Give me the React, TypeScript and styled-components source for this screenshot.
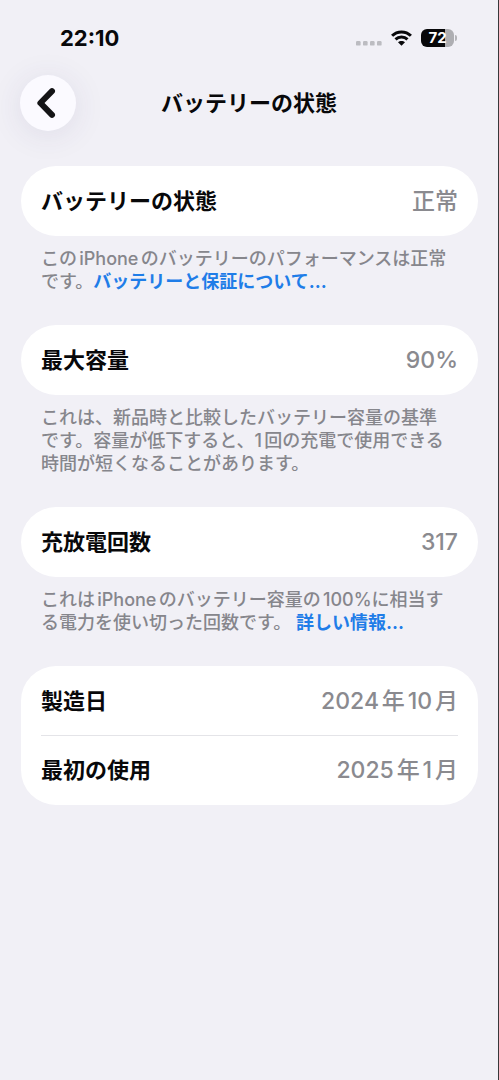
import React from 'react';
import styled, { createGlobalStyle } from 'styled-components';

const GlobalStyle = createGlobalStyle`
  *, *::before, *::after { box-sizing: border-box; }
  html { background: #f1f0f6; }
  body {
    margin: 0;
    background: #f1f0f6;
    color: #08080a;
    font-family: Inter, "Noto Sans CJK JP", sans-serif;
    -webkit-font-smoothing: antialiased;
    text-autospace: normal;
  }
`;

const Screen = styled.div`
  min-height: 100vh;
  border-right: 1px solid #38383a;
`;

const StatusBar = styled.div`
  display: flex;
  align-items: center;
  justify-content: space-between;
  height: 75px;
  padding: 0 41px 0 60px;
`;

const Time = styled.time`
  font-size: 22px;
  line-height: 24px;
  font-weight: 700;
`;

const StatusIcons = styled.div`
  display: flex;
  align-items: center;
  gap: 9px;
`;

const Battery = styled.div`
  display: flex;
  align-items: center;
  gap: 1px;
`;

const BatteryBody = styled.div<{ $level: number }>`
  display: flex;
  align-items: center;
  justify-content: center;
  width: 33px;
  height: 18px;
  border-radius: 6px;
  background: linear-gradient(to right, #08080a ${(p) => p.$level}%, #aeaeb2 ${(p) => p.$level}%);
  color: #ffffff;
  font-size: 15px;
  line-height: 18px;
  font-weight: 700;
`;

const BatteryTip = styled.span`
  width: 2px;
  height: 6px;
  border-radius: 0 2px 2px 0;
  background: #b4b4b8;
`;

const Header = styled.header`
  display: grid;
  grid-template-columns: 56px 1fr 56px;
  align-items: center;
  padding: 0 20px;
`;

const BackButton = styled.button`
  display: flex;
  align-items: center;
  justify-content: center;
  width: 56px;
  height: 56px;
  padding: 0;
  border: 0;
  border-radius: 50%;
  background: #fbfaff;
  box-shadow: 0 4px 32px rgba(60, 50, 110, 0.1);
  color: #141416;
  cursor: pointer;
`;

const Title = styled.h1`
  margin: 0;
  font-size: 22px;
  line-height: 32px;
  font-weight: 700;
  text-align: center;
`;

const Content = styled.main`
  display: flex;
  flex-direction: column;
  gap: 32px;
  padding: 35px 20px 40px 21px;
`;

const Card = styled.dl`
  margin: 0;
  padding: 0 20px 1px;
  border-radius: 35px;
  background: #ffffff;
`;

const Row = styled.div`
  display: flex;
  align-items: center;
  justify-content: space-between;
  height: 69px;

  & + & {
    border-top: 1px solid #e4e4e8;
  }
`;

const Label = styled.dt`
  font-size: 22px;
  line-height: 32px;
  font-weight: 700;
`;

const Value = styled.dd`
  margin: 0;
  color: #8a8a8f;
  font-size: 23px;
  line-height: 32px;
  font-weight: 500;
`;

const Note = styled.p`
  margin: 11px 0 0;
  padding: 0 20px;
  color: #86868c;
  font-size: 18px;
  line-height: 23px;
  font-weight: 500;
`;

const NoteLink = styled.a`
  color: #1f7de8;
  font-weight: 700;
  text-decoration: none;
`;

const SignalIcon = () => (
  <svg width="26" height="18" viewBox="0 0 26 18" fill="#bcbcc1" aria-hidden="true">
    {[0, 7, 14, 21].map((x) => (
      <rect key={x} x={x} y="12" width="4.6" height="4.6" rx="1.2" />
    ))}
  </svg>
);

const WifiIcon = () => (
  <svg width="21" height="16" viewBox="0 0 21 16" fill="none" stroke="#08080a" strokeWidth="3" aria-hidden="true">
    <path d="M1.1 5.7C6.3 .6 14.7 .6 19.9 5.7" />
    <path d="M4.5 9.4c3.3-3.1 8.7-3.1 12 0" />
    <path d="M7 12.2c1.9-1.7 5.1-1.7 7 0L10.5 15.7Z" fill="#08080a" stroke="none" />
  </svg>
);

const ChevronIcon = () => (
  <svg width="28" height="36" viewBox="0 0 28 36" fill="none" stroke="currentColor" strokeWidth="6" strokeLinecap="round" strokeLinejoin="round" aria-hidden="true">
    <path d="M18 6.2L6.4 18 18 29.8" />
  </svg>
);

type Item = { label: string; value: string };

const Group = ({ items, children }: { items: Item[]; children?: React.ReactNode }) => (
  <section>
    <Card>
      {items.map((item) => (
        <Row key={item.label}>
          <Label>{item.label}</Label>
          <Value>{item.value}</Value>
        </Row>
      ))}
    </Card>
    {children && <Note>{children}</Note>}
  </section>
);

export default function App() {
  return (
    <Screen lang="ja">
      <GlobalStyle />
      <StatusBar>
        <Time>22:10</Time>
        <StatusIcons>
          <SignalIcon />
          <WifiIcon />
          <Battery>
            <BatteryBody $level={72}>72</BatteryBody>
            <BatteryTip />
          </Battery>
        </StatusIcons>
      </StatusBar>
      <Header>
        <BackButton type="button" aria-label="戻る">
          <ChevronIcon />
        </BackButton>
        <Title>バッテリーの状態</Title>
      </Header>
      <Content>
        <Group items={[{ label: 'バッテリーの状態', value: '正常' }]}>
          このiPhoneのバッテリーのパフォーマンスは正常
          <br />
          です。<NoteLink href="#warranty">バッテリーと保証について...</NoteLink>
        </Group>
        <Group items={[{ label: '最大容量', value: '90%' }]}>
          これは、新品時と比較したバッテリー容量の基準
          <br />
          です。容量が低下すると、1回の充電で使用できる
          <br />
          時間が短くなることがあります。
        </Group>
        <Group items={[{ label: '充放電回数', value: '317' }]}>
          これはiPhoneのバッテリー容量の100%に相当す
          <br />
          る電力を使い切った回数です。 <NoteLink href="#cycles">詳しい情報...</NoteLink>
        </Group>
        <Group
          items={[
            { label: '製造日', value: '2024年10月' },
            { label: '最初の使用', value: '2025年1月' },
          ]}
        />
      </Content>
    </Screen>
  );
}
